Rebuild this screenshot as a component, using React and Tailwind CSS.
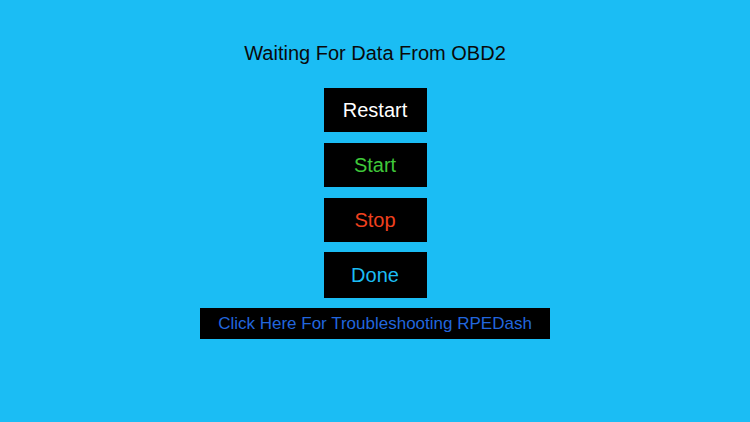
export default function App() {
  const buttons = [
    { label: "Restart", color: "text-white", h: "h-[44px]", mt: "mt-[22px]" },
    { label: "Start", color: "text-[#3fc83a]", h: "h-[44px]", mt: "mt-[11px]" },
    { label: "Stop", color: "text-[#f0401e]", h: "h-[44px]", mt: "mt-[11px]" },
    { label: "Done", color: "text-[#1bbdf4]", h: "h-[46px]", mt: "mt-[10px]" },
  ];

  return (
    <div
      className="w-[750px] h-[422px] bg-[#1bbdf4] flex flex-col items-center pt-[40px]"
      style={{ fontFamily: '"Liberation Sans", Arial, sans-serif' }}
    >
      <h1 className="text-[20px] leading-[26px] text-[#0a0a0a]">
        Waiting For Data From OBD2
      </h1>

      {buttons.map((b) => (
        <button
          key={b.label}
          className={`w-[103px] ${b.h} ${b.mt} bg-black flex items-center justify-center text-[20px] ${b.color}`}
        >
          {b.label}
        </button>
      ))}

      <button className="mt-[10px] w-[350px] h-[31px] bg-black flex items-center justify-center text-[17px] text-[#2266dd]">
        Click Here For Troubleshooting RPEDash
      </button>
    </div>
  );
}
